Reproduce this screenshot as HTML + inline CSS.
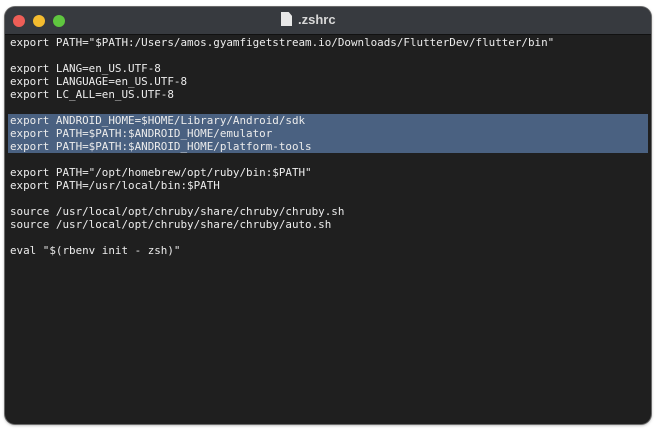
<!DOCTYPE html>
<html><head><style>
html,body{margin:0;padding:0;background:#fff;width:657px;height:432px;overflow:hidden}
.win{position:absolute;left:5px;top:7px;width:646px;height:417px;background:#1f1f1f;border-radius:10px;overflow:hidden;box-shadow:0 0 0 1px #6a6a6a,0 1px 3px rgba(0,0,0,.4)}
.bar{height:27px;background:#373a3f;border-bottom:1px solid #111;position:relative}
.dot{position:absolute;top:8px;width:12px;height:12px;border-radius:50%}
.title{position:absolute;left:293px;top:5px;color:#d8d8d8;font:bold 13px "Liberation Sans",sans-serif}
.file{position:absolute;left:-17px;top:0;width:11px;height:14px;background:#e8e8e8;clip-path:polygon(0 0,70% 0,100% 28%,100% 100%,0 100%)}
pre{margin:0;padding:0 0 0 5px;font:10.9px/13px "DejaVu Sans Mono",monospace;color:#ececec;position:relative;top:1px}
.hl{background:#4a6181;margin-left:-2px;padding-left:2px;width:638px;display:block}
</style></head><body>
<div class="win">
<div class="bar">
<div class="dot" style="left:8px;background:#ee5e57"></div>
<div class="dot" style="left:28px;background:#f4bc2f"></div>
<div class="dot" style="left:48px;background:#5fc63f"></div>
<div class="title"><span class="file"></span>.zshrc</div>
</div>
<pre>export PATH="$PATH:/Users/amos.gyamfigetstream.io/Downloads/FlutterDev/flutter/bin"

export LANG=en_US.UTF-8
export LANGUAGE=en_US.UTF-8
export LC_ALL=en_US.UTF-8

<span class="hl">export ANDROID_HOME=$HOME/Library/Android/sdk
export PATH=$PATH:$ANDROID_HOME/emulator
export PATH=$PATH:$ANDROID_HOME/platform-tools</span>
export PATH="/opt/homebrew/opt/ruby/bin:$PATH"
export PATH=/usr/local/bin:$PATH

source /usr/local/opt/chruby/share/chruby/chruby.sh
source /usr/local/opt/chruby/share/chruby/auto.sh

eval "$(rbenv init - zsh)"</pre>
</div>
</body></html>
